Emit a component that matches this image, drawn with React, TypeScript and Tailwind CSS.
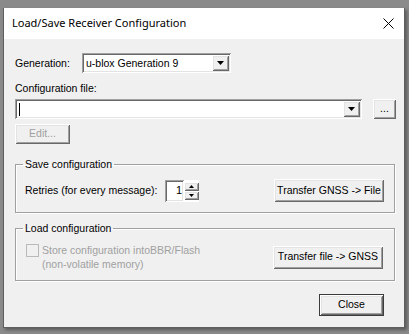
import React from "react";

const sunken =
  "shadow-[inset_1px_1px_0_#a0a0a0,inset_-1px_-1px_0_#ffffff,inset_2px_2px_0_#696969,inset_-2px_-2px_0_#e3e3e3]";
const raised =
  "shadow-[inset_1px_1px_0_#ffffff,inset_-1px_-1px_0_#696969,inset_2px_2px_0_#e3e3e3,inset_-2px_-2px_0_#a0a0a0]";

const DownArrow = () => (
  <svg width="7" height="4" viewBox="0 0 7 4">
    <path d="M0 0h7L3.5 4z" fill="#000" />
  </svg>
);

const DropButton = () => (
  <div className={`flex items-center justify-center w-[17px] h-[16px] bg-[#f0f0f0] ${raised}`}>
    <DownArrow />
  </div>
);

const Combo = ({ width, children }: { width: string; children?: React.ReactNode }) => (
  <div className={`flex items-center h-[20px] bg-white ${sunken} ${width} pl-[4px] pr-[2px]`}>
    <div className="flex-1 leading-[13px] whitespace-nowrap">{children}</div>
    <DropButton />
  </div>
);

const Button = ({
  width,
  height,
  children,
  disabled,
  isDefault,
}: {
  width: string;
  height: string;
  children: React.ReactNode;
  disabled?: boolean;
  isDefault?: boolean;
}) => (
  <div className={`${width} ${height} ${isDefault ? "border border-[#3c3c3c]" : ""}`}>
    <div
      className={`w-full h-full flex items-center justify-center bg-[#f0f0f0] ${raised} ${
        disabled ? "text-[#a0a0a0]" : "text-black"
      }`}
    >
      {children}
    </div>
  </div>
);

const Group = ({ title, children, className }: { title: string; children: React.ReactNode; className?: string }) => (
  <fieldset
    className={`border border-[#a0a0a0] shadow-[inset_1px_1px_0_#ffffff,1px_1px_0_#ffffff] w-[380px] ${className ?? ""}`}
  >
    <legend className="ml-[7px] px-[2px] leading-[13px]">{title}</legend>
    {children}
  </fieldset>
);

export default function App() {
  return (
    <div
      className="w-[409px] h-[334px] bg-[#8a8a8a] pl-[3px] pt-[8px] text-[10.5px] text-black"
      style={{ fontFamily: '"Liberation Sans", Arial, sans-serif' }}
    >
      <div className="w-[402px] h-[320px] flex flex-col border-l border-r border-b border-[#5f5f5f] shadow-[2px_2px_3px_rgba(0,0,0,0.35)]">
        <div className="h-[31px] bg-white flex items-center justify-between pl-[8px] pr-[10px]">
          <span className="text-[11px] text-black" style={{ fontFamily: '"Noto Sans", sans-serif' }}>
            Load/Save Receiver Configuration
          </span>
          <svg width="11" height="11" viewBox="0 0 11 11">
            <path d="M0.5 0.5l10 10M10.5 0.5l-10 10" stroke="#000" strokeWidth="1" />
          </svg>
        </div>
        <div className="flex-1 bg-[#f0f0f0] pl-[11px] pt-[14px] flex flex-col">
          <div className="flex items-center h-[20px]">
            <span className="w-[67px] leading-[13px]">Generation:</span>
            <Combo width="w-[149px]">u-blox Generation 9</Combo>
          </div>
          <div className="mt-[9px] leading-[13px]">Configuration file:</div>
          <div className="flex items-center mt-[4px]">
            <Combo width="w-[347px]">
              <div className="w-px h-[13px] bg-black" />
            </Combo>
            <div className="ml-[11px]">
              <Button width="w-[23px]" height="h-[20px]">
                <span className="leading-[13px] -mt-[2px]">...</span>
              </Button>
            </div>
          </div>
          <div className="mt-[5px]">
            <Button width="w-[55px]" height="h-[20px]" disabled>
              Edit...
            </Button>
          </div>
          <Group title="Save configuration" className="mt-[14px]">
            <div className="flex items-center pl-[9px] pr-[10px] pt-[8px] pb-[10px]">
              <span className="w-[140px] leading-[13px]">Retries (for every message):</span>
              <div className="flex h-[22px]">
                <div className={`w-[19px] h-full bg-white ${sunken} flex items-center justify-end pr-[2px]`}>
                  <span className="text-[11px] leading-[13px]">1</span>
                </div>
                <div className="flex flex-col w-[15px] h-full py-[2px] bg-white">
                  <div className={`flex-1 flex items-center justify-center bg-[#f0f0f0] ${raised}`}>
                    <svg width="5" height="3" viewBox="0 0 5 3">
                      <path d="M2.5 0L5 3H0z" fill="#000" />
                    </svg>
                  </div>
                  <div className={`flex-1 flex items-center justify-center bg-[#f0f0f0] ${raised}`}>
                    <svg width="5" height="3" viewBox="0 0 5 3">
                      <path d="M0 0h5L2.5 3z" fill="#000" />
                    </svg>
                  </div>
                </div>
              </div>
              <div className="ml-auto">
                <Button width="w-[110px]" height="h-[23px]">
                  Transfer GNSS -&gt; File
                </Button>
              </div>
            </div>
          </Group>
          <Group title="Load configuration" className="mt-[9px]">
            <div className="flex items-center pl-[10px] pr-[11px] pt-[8px] pb-[9px]">
              <div className="flex items-start text-[#a0a0a0]">
                <div className="w-[13px] h-[13px] mt-[1px] border border-[#b9b9b9] bg-[#f0f0f0]" />
                <div className="ml-[3px] leading-[14px]">
                  Store configuration intoBBR/Flash
                  <br />
                  (non-volatile memory)
                </div>
              </div>
              <div className="ml-auto">
                <Button width="w-[110px]" height="h-[23px]">
                  Transfer file -&gt; GNSS
                </Button>
              </div>
            </div>
          </Group>
          <div className="flex justify-end pr-[20px] mt-[13px]">
            <Button width="w-[65px]" height="h-[22px]" isDefault>
              Close
            </Button>
          </div>
        </div>
      </div>
    </div>
  );
}
